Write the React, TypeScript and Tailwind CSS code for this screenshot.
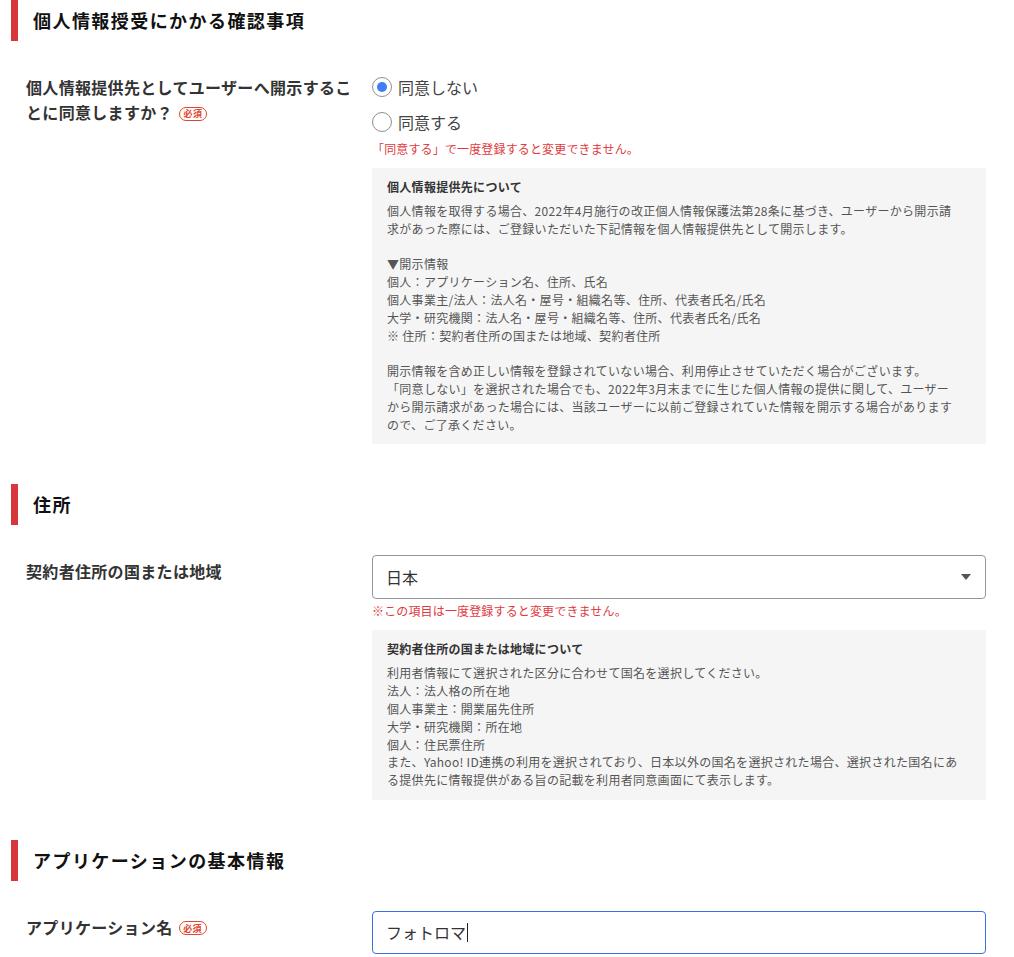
import type { ReactNode } from 'react';

const FONT = { fontFamily: '"Noto Sans CJK JP", "Noto Sans", sans-serif' };

function SectionHeader({ title }: { title: string }) {
  return (
    <div className="flex h-[41px] items-center pl-[11px]">
      <span className="h-full w-[7px] bg-[#d7373b]" />
      <h2 className="ml-[15px] text-[18px] font-bold tracking-[0.08em] text-[#111]">{title}</h2>
    </div>
  );
}

function Required() {
  return (
    <span className="ml-[6px] inline-flex h-[14px] w-[28px] items-center justify-center rounded-full border border-[#e0452f] align-[2px] text-[9px] font-bold leading-none text-[#e0452f]">
      必須
    </span>
  );
}

function Row({ label, children }: { label: ReactNode; children: ReactNode }) {
  return (
    <div className="mt-[30px] flex pl-[26px]">
      <div className="w-[346px] shrink-0 pt-[4px] text-[16px] font-bold leading-[25px] tracking-[0.02em] text-[#333]">
        {label}
      </div>
      <div className="w-[614px]">{children}</div>
    </div>
  );
}

function Note({ children }: { children: ReactNode }) {
  return <p className="mt-[3px] text-[12px] leading-[18px] tracking-[0.15px] text-[#e03a3e]">{children}</p>;
}

function InfoBox({ title, children }: { title: string; children: ReactNode }) {
  return (
    <div className="mt-[10px] bg-[#f5f5f5] px-[15px] pb-[11px] pt-[10px] text-[12px] tracking-[0.3px]">
      <p className="font-bold leading-[18px] text-[#333]">{title}</p>
      <div className="mt-[6px] leading-[17.8px] text-[#555]">{children}</div>
    </div>
  );
}

function Radio({ checked, label }: { checked?: boolean; label: string }) {
  return (
    <label className="flex h-[32px] items-center">
      <span className="grid h-[20px] w-[20px] place-items-center rounded-full border border-[#8f8f8f] bg-white">
        {checked && <span className="h-[10px] w-[10px] rounded-full bg-[#3f7ef6]" />}
      </span>
      <span className="ml-[6px] text-[16px] text-[#444]">{label}</span>
    </label>
  );
}

export default function App() {
  return (
    <div className="min-h-[957px] w-[1014px] bg-white" style={FONT}>
      <section className="pb-[40px]">
        <SectionHeader title="個人情報授受にかかる確認事項" />
        <Row
          label={
            <>
              個人情報提供先としてユーザーへ開示するこ
              <br />
              とに同意しますか？
              <Required />
            </>
          }
        >
          <div className="flex flex-col gap-[3px]">
            <Radio checked label="同意しない" />
            <Radio label="同意する" />
          </div>
          <p className="mt-[2px] text-[12px] leading-[18px] tracking-[0.15px] text-[#e03a3e]">
            「同意する」で一度登録すると変更できません。
          </p>
          <InfoBox title="個人情報提供先について">
            <p>
              個人情報を取得する場合、2022年4月施行の改正個人情報保護法第28条に基づき、ユーザーから開示請
              <br />
              求があった際には、ご登録いただいた下記情報を個人情報提供先として開示します。
            </p>
            <p className="mt-[17.8px]">
              ▼開示情報
              <br />
              個人：アプリケーション名、住所、氏名
              <br />
              個人事業主/法人：法人名・屋号・組織名等、住所、代表者氏名/氏名
              <br />
              大学・研究機関：法人名・屋号・組織名等、住所、代表者氏名/氏名
              <br />
              ※ 住所：契約者住所の国または地域、契約者住所
            </p>
            <p className="mt-[17.8px]">
              開示情報を含め正しい情報を登録されていない場合、利用停止させていただく場合がございます。
              <br />
              「同意しない」を選択された場合でも、2022年3月末までに生じた個人情報の提供に関して、ユーザー
              <br />
              から開示請求があった場合には、当該ユーザーに以前ご登録されていた情報を開示する場合があります
              <br />
              ので、ご了承ください。
            </p>
          </InfoBox>
        </Row>
      </section>

      <section className="pb-[40px]">
        <SectionHeader title="住所" />
        <Row label="契約者住所の国または地域">
          <div className="flex h-[44px] items-center justify-between rounded-[4px] border border-[#959595] bg-white pl-[13px] pr-[14px]">
            <span className="text-[16px] text-[#333]">日本</span>
            <svg width="10" height="6" viewBox="0 0 10 6" aria-hidden="true">
              <path d="M0 0h10L5 6z" fill="#555" />
            </svg>
          </div>
          <Note>※この項目は一度登録すると変更できません。</Note>
          <InfoBox title="契約者住所の国または地域について">
            <p>
              利用者情報にて選択された区分に合わせて国名を選択してください。
              <br />
              法人：法人格の所在地
              <br />
              個人事業主：開業届先住所
              <br />
              大学・研究機関：所在地
              <br />
              個人：住民票住所
              <br />
              また、Yahoo! ID連携の利用を選択されており、日本以外の国名を選択された場合、選択された国名にあ
              <br />
              る提供先に情報提供がある旨の記載を利用者同意画面にて表示します。
            </p>
          </InfoBox>
        </Row>
      </section>

      <section>
        <SectionHeader title="アプリケーションの基本情報" />
        <Row
          label={
            <>
              アプリケーション名
              <Required />
            </>
          }
        >
          <div className="flex h-[43px] items-center rounded-[4px] border border-[#3b6fe6] bg-white pl-[13px]">
            <span className="text-[16px] text-[#333]">フォトロマ</span>
            <span className="ml-[1px] h-[19px] w-px bg-[#222]" />
          </div>
        </Row>
      </section>
    </div>
  );
}
